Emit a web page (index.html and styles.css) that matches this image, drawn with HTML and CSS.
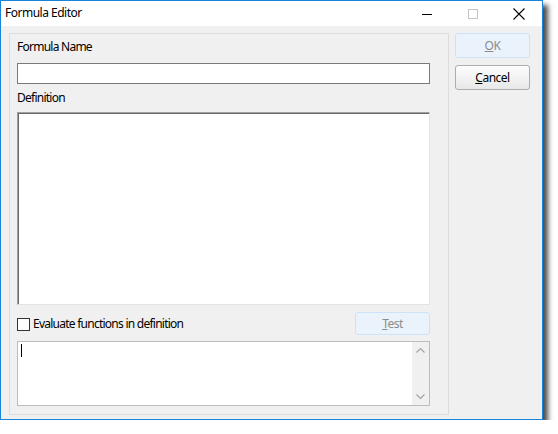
FILE: index.html
```html
<!DOCTYPE html>
<html lang="en">
<head>
  <meta charset="UTF-8">
  <title>Formula Editor</title>
  <link rel="stylesheet" href="styles.css">
</head>
<body>

  <div class="window">
    <div class="titlebar">
      <span class="title">Formula Editor</span>
      <div class="caption">
        <span class="cap">
          <svg width="46" height="25"><line x1="18" y1="13.5" x2="28" y2="13.5" stroke="#000" stroke-width="1"/></svg>
        </span>
        <span class="cap">
          <svg width="46" height="25"><rect x="18.5" y="8.5" width="9" height="9" fill="none" stroke="#c4c4c4" stroke-width="1"/></svg>
        </span>
        <span class="cap">
          <svg width="46" height="25"><path d="M17.5 7.5 L28.5 18.5 M28.5 7.5 L17.5 18.5" stroke="#000" stroke-width="1.1" fill="none"/></svg>
        </span>
      </div>
    </div>

    <div class="client">
      <div class="panel">
        <div class="lbl">Formula Name</div>
        <div class="textbox name"></div>
        <div class="lbl second">Definition</div>
        <div class="textbox definition"></div>

        <div class="eval-row">
          <label class="check"><span class="box"></span>Evaluate functions in definition</label>
          <button class="btn disabled"><u>T</u>est</button>
        </div>

        <div class="output">
          <div class="output-text"><span class="caret"></span></div>
          <div class="vscroll">
            <svg width="17" height="17"><path d="M4.5 10.5 L8.5 6.5 L12.5 10.5" stroke="#a3a3a3" stroke-width="1.2" fill="none"/></svg>
            <svg width="17" height="17"><path d="M4.5 6.5 L8.5 10.5 L12.5 6.5" stroke="#a3a3a3" stroke-width="1.2" fill="none"/></svg>
          </div>
        </div>
      </div>

      <div class="side">
        <button class="btn disabled"><u>O</u>K</button>
        <button class="btn"><u>C</u>ancel</button>
      </div>
    </div>
  </div>

</body>
</html>
```

FILE: styles.css
```css
body {
  margin: 0;
  background-color: #fff;
  font-family: "Noto Sans", sans-serif;
  font-size: 12px;
  letter-spacing: -0.75px;
  color: #000;
}
.window {
  box-sizing: border-box;
  width: 543px;
  height: 420px;
  border: 1px solid #1883d7;
  box-shadow: 5px 5px 5px rgba(0, 0, 0, 0.7);
  display: flex;
  flex-direction: column;
}
.titlebar {
  height: 25px;
  background-color: #fff;
  display: flex;
  align-items: flex-start;
}
.title {
  padding: 4px 0 0 4px;
  line-height: 16px;
  letter-spacing: -0.5px;
}
.caption {
  margin-left: auto;
  display: flex;
}
.cap {
  width: 46px;
  height: 25px;
}
.cap svg {
  display: block;
}
.client {
  flex: 1;
  background-color: #f0f0f0;
  display: flex;
  align-items: flex-start;
  padding: 7px 12px 4px 8px;
}
.panel {
  box-sizing: border-box;
  width: 440px;
  height: 382px;
  border: 1px solid #dcdcdc;
  padding: 5px 18px 8px 7px;
  display: flex;
  flex-direction: column;
}
.lbl {
  line-height: 16px;
}
.lbl.second {
  margin-top: 6px;
}
.textbox {
  box-sizing: border-box;
  background-color: #fff;
}
.name {
  height: 21px;
  margin-top: 8px;
  border: 1px solid #7a7a7a;
}
.definition {
  height: 193px;
  margin-top: 6px;
  border: 1px solid;
  border-color: #a0a0a0 #e3e3e3 #e3e3e3 #a0a0a0;
  box-shadow: inset 1px 1px 0 #696969;
}
.eval-row {
  margin-top: 7px;
  height: 23px;
  display: flex;
  align-items: center;
  justify-content: space-between;
}
.check {
  display: flex;
  align-items: center;
  line-height: 16px;
  padding-top: 1px;
}
.box {
  box-sizing: border-box;
  width: 13px;
  height: 13px;
  border: 1px solid #333;
  background-color: #fff;
  margin-right: 3px;
}
.btn {
  box-sizing: border-box;
  width: 75px;
  height: 23px;
  padding: 0;
  font-family: inherit;
  font-size: 12px;
  letter-spacing: -0.5px;
  color: #000;
  border: 1px solid #adadad;
  border-radius: 3px;
  background: linear-gradient(#fdfdfd, #e8e8e8);
}
.btn.disabled {
  color: #8c8c8c;
  border-color: #cde2f6;
  background: #eaf3fc;
}
.output {
  box-sizing: border-box;
  height: 65px;
  margin-top: 6px;
  border: 1px solid #bdbdbd;
  background-color: #fff;
  display: flex;
}
.output-text {
  flex: 1;
}
.caret {
  display: block;
  width: 1px;
  height: 13px;
  margin: 2px 0 0 3px;
  background-color: #000;
}
.vscroll {
  width: 17px;
  background-color: #f0f0f0;
  display: flex;
  flex-direction: column;
  justify-content: space-between;
}
.vscroll svg {
  display: block;
}
.side {
  margin-left: 6px;
  display: flex;
  flex-direction: column;
  gap: 7px;
}
.side .btn {
  height: 25px;
}
```
